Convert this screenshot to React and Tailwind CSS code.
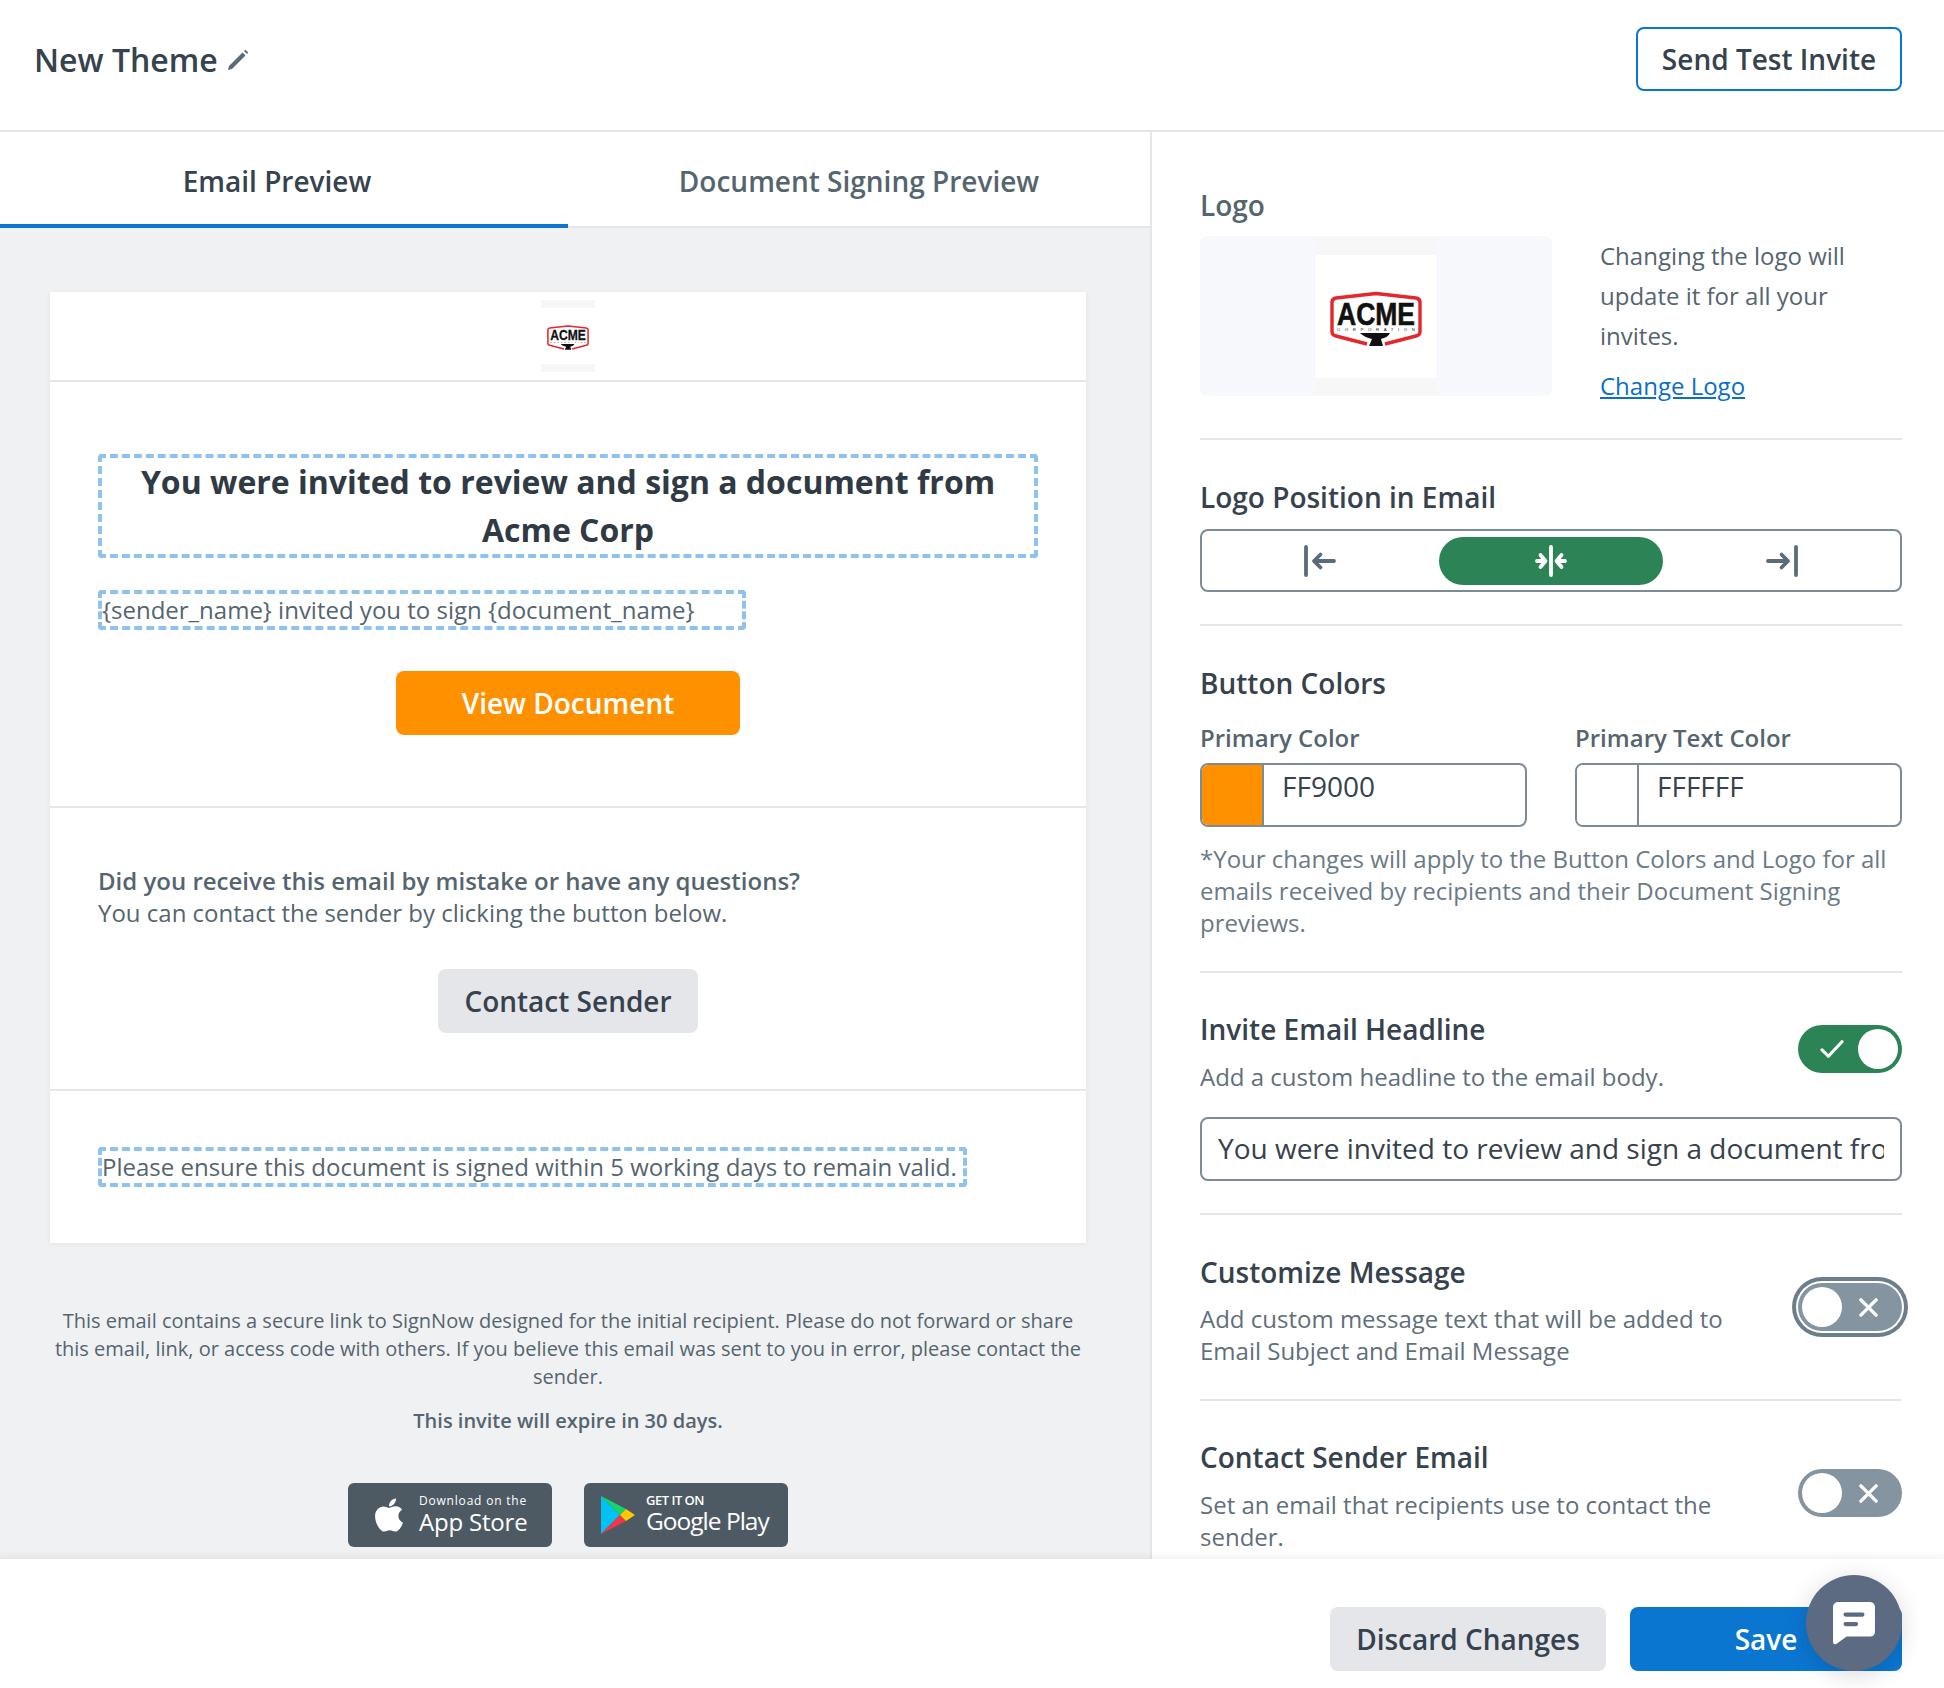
import React from "react";
import { FaApple } from "react-icons/fa";

const AcmeLogo = ({ className }) => (
  <svg className={`overflow-visible ${className}`} viewBox="0 0 92 56" fill="none">
    <path d="M37 52 L6 44 Q2 43 2 40 L2 10 Q2 7 6 6 L46 1.5 L86 6 Q90 7 90 10 L90 40 Q90 43 86 44 L55 52" stroke="#e5262b" strokeWidth="3.4" strokeLinejoin="round" />
    <text x="46" y="33" textAnchor="middle" fontFamily="'Liberation Sans', sans-serif" fontWeight="700" fontSize="31" fill="#111" textLength="78" lengthAdjust="spacingAndGlyphs" stroke="#111" strokeWidth="0.6">ACME</text>
    <text x="46" y="38.5" textAnchor="middle" fontFamily="'Liberation Sans', sans-serif" fontSize="4.4" fill="#222" textLength="78">CORPORATION</text>
    <path d="M30 41 H60 C58 45 54 46 51 47 L53 54 H39 L42 47 C37 46 33 44 30 41 Z" fill="#111" />
  </svg>
);

const Pencil = () => (
  <svg width="22" height="22" viewBox="0 0 22 22" className="ml-[9px] -mt-[11px]">
    <path d="M1 21 L2 17 L15.5 3.5 L18.5 6.5 L5 20 Z" fill="#5b6b78" />
    <path d="M17 2 L18.5 0.8 L21.2 3.5 L20 5 Z" fill="#5b6b78" />
  </svg>
);

const AlignLeft = () => (
  <svg width="32" height="32" viewBox="0 0 32 32" fill="none" stroke="#5b6b78" strokeWidth="3.8" strokeLinecap="round" strokeLinejoin="round">
    <path d="M2 2 V30" />
    <path d="M11 16 H30" />
    <path d="M16.5 9.5 L10 16 L16.5 22.5" />
  </svg>
);

const AlignCenter = () => (
  <svg width="32" height="32" viewBox="0 0 32 32" fill="none" stroke="#fff" strokeWidth="3.8" strokeLinecap="round" strokeLinejoin="round">
    <path d="M16 2 V30" />
    <path d="M2 16 H9" />
    <path d="M5.5 10 L10.5 16 L5.5 22" />
    <path d="M30 16 H23" />
    <path d="M26.5 10 L21.5 16 L26.5 22" />
  </svg>
);

const AlignRight = () => (
  <svg width="32" height="32" viewBox="0 0 32 32" fill="none" stroke="#5b6b78" strokeWidth="3.8" strokeLinecap="round" strokeLinejoin="round">
    <path d="M30 2 V30" />
    <path d="M2 16 H21" />
    <path d="M15.5 9.5 L22 16 L15.5 22.5" />
  </svg>
);

const PlayLogo = () => (
  <svg width="34" height="38" viewBox="0 0 34 38">
    <path d="M0 0 V38 L19 19 Z" fill="#00c3f3" />
    <path d="M0 0 L25 13 L19 19 Z" fill="#16d56f" />
    <path d="M0 38 L25 25 L19 19 Z" fill="#f2354b" />
    <path d="M25 13 L34 19 L25 25 L19 19 Z" fill="#ffc800" />
  </svg>
);

const ChatIcon = () => (
  <svg width="44" height="44" viewBox="0 0 42 42">
    <path d="M6 1 H36 C39 1 41 3 41 6 V29 C41 32 39 34 36 34 H14 L4 41 C2 42 1 41 1 39 V6 C1 3 3 1 6 1 Z" fill="#fff" />
    <rect x="11" y="11" width="20" height="4" rx="2" fill="#5d6b82" />
    <rect x="11" y="20" width="14" height="4" rx="2" fill="#5d6b82" />
  </svg>
);

const Toggle = ({ on, focused }) => (
  <div className={`w-[104px] h-[48px] rounded-full flex items-center justify-between px-[4px] shrink-0 ${on ? "bg-[#2c8456]" : "bg-[#8494a0]"} ${focused ? "shadow-[0_0_0_2px_#fff,0_0_0_6px_#6d7e8b]" : ""}`}>
    {on ? (
      <>
        <svg width="24" height="20" viewBox="0 0 26 22" fill="none" stroke="#fff" strokeWidth="3.4" strokeLinecap="round" strokeLinejoin="round" className="ml-[18px]">
          <path d="M2 12 L9 19 L24 3" />
        </svg>
        <div className="w-[40px] h-[40px] rounded-full bg-white" />
      </>
    ) : (
      <>
        <div className="w-[40px] h-[40px] rounded-full bg-white" />
        <svg width="19" height="19" viewBox="0 0 20 20" fill="none" stroke="#fff" strokeWidth="3.6" strokeLinecap="round" className="mr-[20px]">
          <path d="M2 2 L18 18 M18 2 L2 18" />
        </svg>
      </>
    )}
  </div>
);

const ColorField = ({ label, value, swatch }) => (
  <div className="w-[327px]">
    <div className="text-[24px] leading-[28px] font-semibold text-[#55656f]">{label}</div>
    <div className="mt-[11px] h-[64px] border-2 border-[#7d8b98] rounded-[8px] flex overflow-hidden">
      <div className={`w-[62px] border-r-2 border-[#7d8b98] ${swatch}`} />
      <div className="pl-[18px] pt-[4px] text-[28px] leading-[34px] text-[#36424d]">{value}</div>
    </div>
  </div>
);

const Divider = () => <div className="h-[2px] bg-[#e5e6ea]" />;

export default function App() {
  return (
    <div className="relative w-[1944px] h-[1688px] overflow-hidden bg-white flex flex-col font-['Open_Sans',sans-serif] text-[#36424d]">
      <header className="h-[132px] shrink-0 border-b-2 border-[#e5e6ea] flex items-center justify-between pl-[34px] pr-[42px]">
        <div className="flex items-center">
          <h1 className="text-[32px] leading-[44px] font-semibold -mt-[10px]">New Theme</h1>
          <Pencil />
        </div>
        <button className="w-[266px] h-[64px] border-2 border-[#0b76d0] rounded-[8px] text-[28px] font-semibold bg-white -mt-[13px]">Send Test Invite</button>
      </header>

      <main className="flex-1 flex min-h-0">
        <section className="w-[1152px] shrink-0 border-r-2 border-[#e5e6ea] bg-[#f0f1f3] overflow-hidden">
          <div className="h-[96px] bg-white border-b-2 border-[#e5e6ea] flex text-[28px] font-semibold">
            <div className="w-[568px] h-[96px] border-b-4 border-[#0b76d0] flex items-center justify-center pr-[14px] pt-[5px]">Email Preview</div>
            <div className="flex-1 flex items-center justify-center text-[#55656f] pt-[3px]">Document Signing Preview</div>
          </div>

          <div className="mx-[50px] mt-[64px] w-[1036px] bg-white shadow-[0_1px_6px_rgba(0,0,0,0.06)]">
            <div className="h-[90px] border-b-2 border-[#e5e6ea] pt-[8px] flex justify-center">
              <div className="w-[54px] h-[72px] bg-[#f7f7f7] py-[8px]">
                <div className="h-[56px] pt-[4px] bg-white flex items-center justify-center">
                  <AcmeLogo className="w-[42px] h-[26px]" />
                </div>
              </div>
            </div>

            <div className="h-[426px] border-b-2 border-[#e5e6ea] px-[48px] pt-[72px]">
              <div className="border-[4px] border-dashed border-[#90c2ee] rounded-[4px] h-[104px] text-center text-[32px] leading-[48px] font-bold text-[#2f3a44]">
                You were invited to review and sign a document from Acme Corp
              </div>
              <div className="mt-[32px] w-[648px] h-[40px] border-[4px] border-dashed border-[#90c2ee] rounded-[4px] text-[24px] leading-[32px] text-[#55656f] whitespace-nowrap">
                {"{sender_name} invited you to sign {document_name}"}
              </div>
              <div className="mt-[41px] flex justify-center">
                <button className="w-[344px] h-[64px] rounded-[8px] bg-[#ff9000] text-white text-[28px] font-semibold">View Document</button>
              </div>
            </div>

            <div className="h-[283px] border-b-2 border-[#e5e6ea] px-[48px] pt-[57px]">
              <div className="text-[24px] leading-[32px] text-[#55656f]">
                <div className="font-semibold">Did you receive this email by mistake or have any questions?</div>
                <div>You can contact the sender by clicking the button below.</div>
              </div>
              <div className="mt-[40px] flex justify-center">
                <button className="w-[260px] h-[64px] rounded-[8px] bg-[#e5e6ea] text-[28px] font-semibold">Contact Sender</button>
              </div>
            </div>

            <div className="h-[152px] px-[48px] pt-[56px]">
              <div className="w-[869px] h-[40px] border-[4px] border-dashed border-[#90c2ee] rounded-[4px] text-[24px] leading-[32px] text-[#55656f] whitespace-nowrap">
                Please ensure this document is signed within 5 working days to remain valid.
              </div>
            </div>
          </div>

          <div className="w-[1136px] mt-[64px] px-[50px] text-center text-[20px] leading-[28px] text-[#55656f]">
            <p>This email contains a secure link to SignNow designed for the initial recipient. Please do not forward or share this email, link, or access code with others. If you believe this email was sent to you in error, please contact the sender.</p>
            <p className="mt-[16px] font-semibold">This invite will expire in 30 days.</p>
          </div>

          <div className="w-[1136px] mt-[48px] flex justify-center gap-[32px]">
            <div className="w-[204px] h-[64px] rounded-[6px] bg-[#4d5a64] text-white flex items-center pl-[24px]">
              <FaApple className="w-[34px] h-[38px]" />
              <div className="ml-[13px] -mt-[1px]">
                <div className="text-[12px] leading-[14px] tracking-[0.8px]">Download on the</div>
                <div className="text-[24px] leading-[28px] tracking-[-0.2px]">App Store</div>
              </div>
            </div>
            <div className="w-[204px] h-[64px] rounded-[6px] bg-[#4d5a64] text-white flex items-center pl-[17px]">
              <PlayLogo />
              <div className="ml-[11px] -mt-[3px]">
                <div className="text-[13px] leading-[14px] font-semibold tracking-[-0.5px]">GET IT ON</div>
                <div className="text-[24.5px] leading-[28px] tracking-[-1px]">Google Play</div>
              </div>
            </div>
          </div>
        </section>

        <aside className="flex-1 min-w-0 pl-[48px] pr-[42px] overflow-hidden">
          <div className="pt-[57px] pb-[42px]">
            <h2 className="text-[28px] leading-[32px] font-semibold text-[#55656f]">Logo</h2>
            <div className="mt-[15px] flex">
              <div className="w-[352px] h-[160px] rounded-[8px] bg-[#f6f8fb] flex justify-center">
                <div className="w-[120px] bg-[#f7f7f7] pt-[19px] pb-[18px]">
                  <div className="h-[123px] pt-[7px] bg-white flex items-center justify-center">
                    <AcmeLogo className="w-[92px] h-[56px]" />
                  </div>
                </div>
              </div>
              <div className="ml-[48px] h-[160px] text-[24px] leading-[40px] text-[#55656f]">
                <p className="w-[280px]">Changing the logo will update it for all your invites.</p>
                <a href="#" className="block mt-[10px] text-[#0b6fc4] underline">Change Logo</a>
              </div>
            </div>
          </div>
          <Divider />

          <div className="pt-[41px] pb-[32px]">
            <h2 className="text-[28px] leading-[32px] font-semibold">Logo Position in Email</h2>
            <div className="mt-[16px] h-[63px] border-2 border-[#7d8b98] rounded-[8px] flex items-center justify-center gap-[7px]">
              <div className="w-[224px] h-[48px] flex items-center justify-center"><AlignLeft /></div>
              <div className="w-[224px] h-[48px] rounded-full bg-[#2c8456] flex items-center justify-center"><AlignCenter /></div>
              <div className="w-[224px] h-[48px] flex items-center justify-center"><AlignRight /></div>
            </div>
          </div>
          <Divider />

          <div className="pt-[41px] pb-[32px]">
            <h2 className="text-[28px] leading-[32px] font-semibold">Button Colors</h2>
            <div className="mt-[25px] flex justify-between">
              <ColorField label="Primary Color" value="FF9000" swatch="bg-[#ff9000]" />
              <ColorField label="Primary Text Color" value="FFFFFF" swatch="bg-white" />
            </div>
            <p className="mt-[16px] text-[24px] leading-[32px] text-[#6a7a86]">*Your changes will apply to the Button Colors and Logo for all emails received by recipients and their Document Signing previews.</p>
          </div>
          <Divider />

          <div className="pt-[40px] pb-[32px]">
            <div className="flex justify-between">
              <div>
                <h2 className="text-[28px] leading-[32px] font-semibold">Invite Email Headline</h2>
                <p className="mt-[16px] text-[24px] leading-[32px] text-[#5f6f7b]">Add a custom headline to the email body.</p>
              </div>
              <div className="mt-[12px]"><Toggle on /></div>
            </div>
            <input readOnly value="You were invited to review and sign a document from Acme Corp" className="mt-[24px] block w-full h-[64px] border-2 border-[#7d8b98] rounded-[8px] px-[16px] pb-[2px] text-[28px] text-[#36424d] outline-none" />
          </div>
          <Divider />

          <div className="pt-[41px] pb-[32px] flex justify-between">
            <div className="w-[570px]">
              <h2 className="text-[28px] leading-[32px] font-semibold">Customize Message</h2>
              <p className="mt-[15px] text-[24px] leading-[32px] text-[#5f6f7b]">Add custom message text that will be added to Email Subject and Email Message</p>
            </div>
            <div className="mt-[27px]"><Toggle focused /></div>
          </div>
          <Divider />

          <div className="pt-[40px] flex justify-between">
            <div className="w-[570px]">
              <h2 className="text-[28px] leading-[32px] font-semibold">Contact Sender Email</h2>
              <p className="mt-[16px] text-[24px] leading-[32px] text-[#5f6f7b]">Set an email that recipients use to contact the sender.</p>
            </div>
            <div className="mt-[28px]"><Toggle /></div>
          </div>
        </aside>
      </main>

      <footer className="relative h-[129px] shrink-0 bg-white shadow-[0_-2px_8px_rgba(0,0,0,0.07)] flex justify-end items-start pt-[48px] pr-[42px] gap-[24px]">
        <button className="w-[276px] h-[64px] rounded-[8px] bg-[#e5e6ea] text-[28px] font-semibold">Discard Changes</button>
        <button className="w-[272px] h-[64px] rounded-[8px] bg-[#0b76d0] text-white text-[28px] font-semibold">Save</button>
        <div className="absolute right-[42px] top-[16px] w-[96px] h-[96px] rounded-full bg-[#5d6b82] flex items-center justify-center shadow-[0_4px_24px_rgba(0,0,0,0.15)]">
          <ChatIcon />
        </div>
      </footer>
    </div>
  );
}
